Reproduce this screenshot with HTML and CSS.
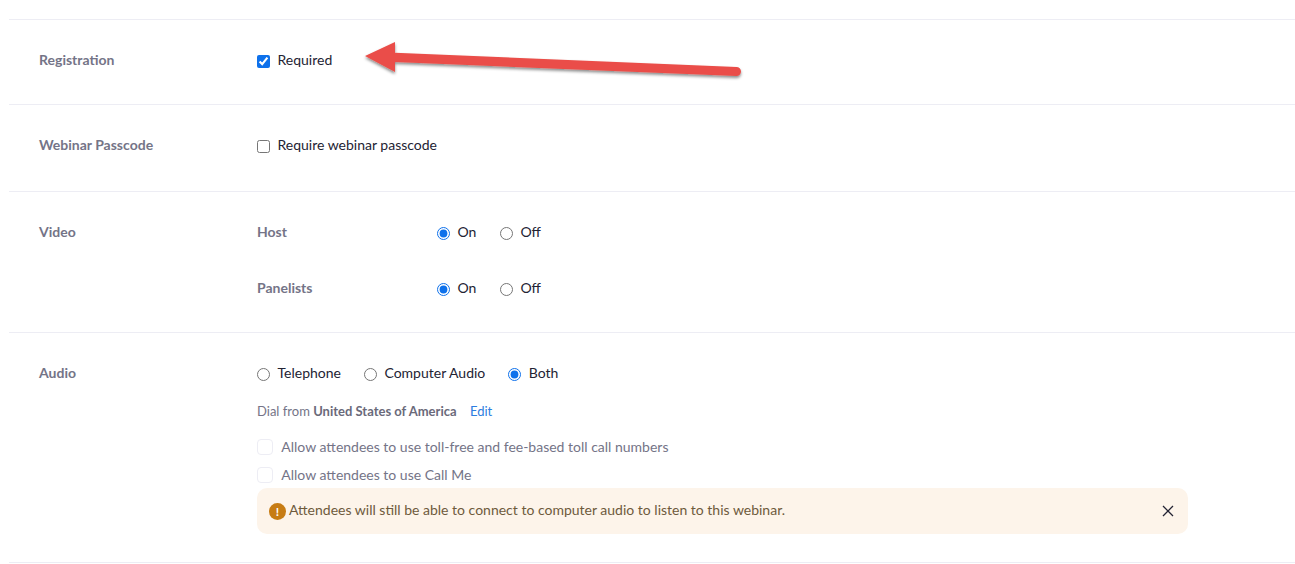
FILE: index.html
```html
<!DOCTYPE html>
<html lang="en">
<head>
    <meta charset="UTF-8">
    <meta name="viewport" content="width=device-width, initial-scale=1.0">
    <title>Webinar Options</title>
    <link rel="stylesheet" href="styles.css">
</head>
<body>
    <div class="settings">
        <div class="setting-row row-first">
            <div class="setting-label">Registration</div>
            <div class="setting-body">
                <label class="option"><input type="checkbox" checked> Required</label>
            </div>
        </div>
        <div class="setting-row row-passcode">
            <div class="setting-label">Webinar Passcode</div>
            <div class="setting-body">
                <label class="option"><input type="checkbox"> Require webinar passcode</label>
            </div>
        </div>
        <div class="setting-row">
            <div class="setting-label">Video</div>
            <div class="setting-body video-list">
                <div class="video-item">
                    <div class="video-name">Host</div>
                    <label class="option"><input type="radio" name="host" checked> On</label>
                    <label class="option"><input type="radio" name="host"> Off</label>
                </div>
                <div class="video-item">
                    <div class="video-name">Panelists</div>
                    <label class="option"><input type="radio" name="panelists" checked> On</label>
                    <label class="option"><input type="radio" name="panelists"> Off</label>
                </div>
            </div>
        </div>
        <div class="setting-row row-last">
            <div class="setting-label">Audio</div>
            <div class="setting-body">
                <div class="audio-options">
                    <label class="option"><input type="radio" name="audio"> Telephone</label>
                    <label class="option"><input type="radio" name="audio"> Computer Audio</label>
                    <label class="option"><input type="radio" name="audio" checked> Both</label>
                </div>
                <div class="dial-from">Dial from <b>United States of America</b> <a href="#" class="edit-link">Edit</a></div>
                <label class="option-disabled"><input type="checkbox" disabled> Allow attendees to use toll-free and fee-based toll call numbers</label>
                <label class="option-disabled"><input type="checkbox" disabled> Allow attendees to use Call Me</label>
                <div class="notice">
                    <span class="notice-icon">!</span>
                    <span class="notice-text">Attendees will still be able to connect to computer audio to listen to this webinar.</span>
                    <svg class="notice-close" width="12" height="12" viewBox="0 0 12 12">
                        <path d="M1 1 L11 11 M11 1 L1 11" stroke="#232333" stroke-width="1.3" fill="none"/>
                    </svg>
                </div>
            </div>
        </div>
    </div>

    <svg class="annotation" width="400" height="50" viewBox="0 0 400 50">
        <defs>
            <filter id="arrowShadow" x="-5%" y="-30%" width="110%" height="170%">
                <feDropShadow dx="0" dy="2" stdDeviation="1.6" flood-color="#000" flood-opacity="0.45"/>
            </filter>
        </defs>
        <path d="M5 16 L35 2 L35 12.7 L376.5 27 A4.5 4.5 0 0 1 376.5 36 L35 22 L35 32 Z" fill="#ea4e48" filter="url(#arrowShadow)"/>
    </svg>
</body>
</html>
```

FILE: styles.css
```css
body {
    margin: 0;
    padding: 19px 0 0 9px;
    font-family: Lato, "Open Sans", sans-serif;
    font-size: 14px;
    line-height: 24px;
    color: #232333;
    background-color: #fff;
    overflow: hidden;
}
.settings {
    border-bottom: 1px solid #ededf4;
}
.setting-row {
    display: flex;
    padding: 28px 0 32px 30px;
    border-top: 1px solid #ededf4;
}
.row-passcode {
    padding-bottom: 34px;
}
.row-last {
    padding-bottom: 28px;
}
.setting-label {
    width: 218px;
    flex-shrink: 0;
    font-weight: bold;
    color: #747487;
}
.setting-body {
    width: 931px;
}
.option {
    display: flex;
    align-items: center;
    gap: 7.5px;
}
.option input {
    margin: 2px 0 0;
    accent-color: #0e71eb;
}
.video-list {
    display: flex;
    flex-direction: column;
    gap: 32px;
}
.video-item {
    display: flex;
    gap: 23.5px;
}
.video-name {
    width: 156.5px;
    font-weight: bold;
    color: #747487;
}
.audio-options {
    display: flex;
    gap: 23px;
}
.dial-from {
    margin-top: 14px;
    font-size: 13px;
    color: #747487;
}
.dial-from b {
    color: #6a6a7a;
}
.edit-link {
    margin-left: 10px;
    color: #2d7de0;
    text-decoration: none;
}
.option-disabled {
    display: flex;
    align-items: center;
    gap: 8.3px;
    height: 28px;
    color: #747487;
}
.dial-from + .option-disabled {
    margin-top: 10px;
}
.option-disabled input {
    appearance: none;
    width: 16px;
    height: 16px;
    margin: 0;
    border: 1px solid #ededf4;
    border-radius: 4px;
    background-color: #fff;
}
.notice {
    display: flex;
    align-items: center;
    height: 46px;
    margin-top: -1px;
    padding: 0 14px 0 12px;
    border-radius: 10px;
    background-color: #fdf4ea;
    color: #6e5a3c;
}
.notice-icon {
    width: 17px;
    height: 17px;
    margin-right: 3px;
    border-radius: 50%;
    background-color: #c77c14;
    color: #fff;
    font-size: 12px;
    font-weight: bold;
    line-height: 17px;
    text-align: center;
}
.notice-text {
    flex: 1;
    margin-bottom: 2px;
}
.notice-close {
    margin-bottom: 1px;
}
.annotation {
    position: absolute;
    left: 360px;
    top: 40px;
}
```
